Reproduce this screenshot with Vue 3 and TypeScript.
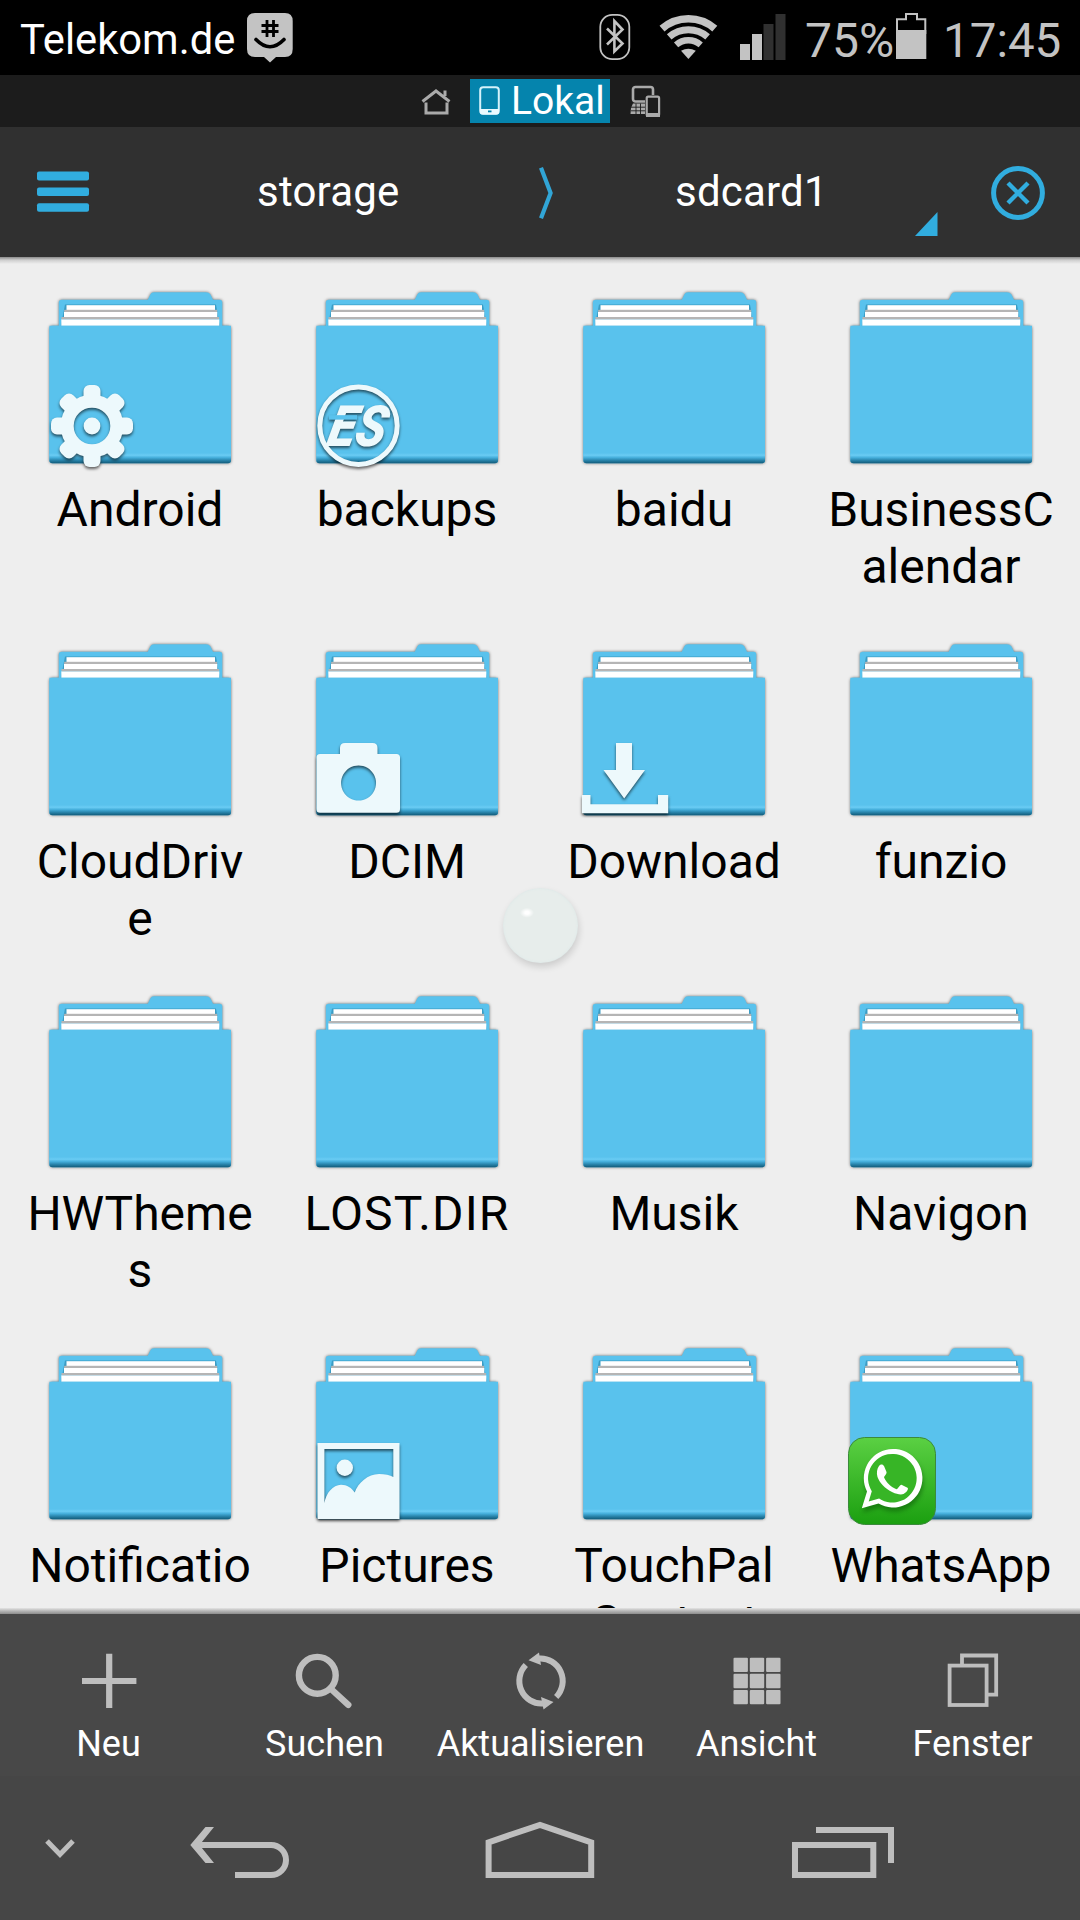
<script setup lang="ts">
type Badge = 'gear' | 'es' | 'camera' | 'download' | 'picture' | 'whatsapp'

interface Folder {
  lines: string[]
  badge?: Badge
  wide?: boolean
}

const folders: Folder[] = [
  { lines: ['Android'], badge: 'gear' },
  { lines: ['backups'], badge: 'es' },
  { lines: ['baidu'] },
  { lines: ['BusinessC', 'alendar'] },
  { lines: ['CloudDriv', 'e'] },
  { lines: ['DCIM'], badge: 'camera' },
  { lines: ['Download'], badge: 'download' },
  { lines: ['funzio'] },
  { lines: ['HWTheme', 's'] },
  { lines: ['LOST.DIR'], wide: true },
  { lines: ['Musik'] },
  { lines: ['Navigon'] },
  { lines: ['Notificatio'] },
  { lines: ['Pictures'], badge: 'picture' },
  { lines: ['TouchPal', 'Contact'] },
  { lines: ['WhatsApp'], badge: 'whatsapp' },
]

const actions = [
  { id: 'new', label: 'Neu' },
  { id: 'search', label: 'Suchen' },
  { id: 'refresh', label: 'Aktualisieren' },
  { id: 'view', label: 'Ansicht' },
  { id: 'windows', label: 'Fenster' },
]

const teeth = [0, 45, 90, 135, 180, 225, 270, 315]
const cells = [0, 1, 2, 3, 4, 5, 6, 7, 8]
</script>

<template>
  <div class="screen">
    <svg class="defs" width="0" height="0">
      <defs>
        <linearGradient id="edge" x1="0" y1="0" x2="0" y2="1">
          <stop offset="0" stop-color="#59c2ed" />
          <stop offset="0.22" stop-color="#6accf4" />
          <stop offset="0.45" stop-color="#45aedb" />
          <stop offset="0.7" stop-color="#2a86ad" />
          <stop offset="1" stop-color="#115a79" />
        </linearGradient>
        <linearGradient id="wa" x1="0" y1="0" x2="0" y2="1">
          <stop offset="0" stop-color="#5bd043" />
          <stop offset="1" stop-color="#1b9f10" />
        </linearGradient>
      </defs>
    </svg>

    <div class="status">
      <span class="carrier">Telekom.de</span>
      <svg class="groupme" width="50" height="56" viewBox="0 0 50 56">
        <path d="M10 3H40Q47.7 3 47.7 11V39Q47.7 47 40 47H31L25 52.5L19 47H10Q2 47 2 39V11Q2 3 10 3Z" fill="#c3c3c3" />
        <path d="M22 10V27M28.5 10V27M16.5 15.5H33.5M16.5 21.5H33.5" stroke="#000" stroke-width="2.8" fill="none" />
        <path d="M11 29.5Q25 44 39 29.5" stroke="#000" stroke-width="3.6" fill="none" stroke-linecap="round" />
      </svg>
      <svg class="bt" width="38" height="56" viewBox="0 0 38 56">
        <rect x="4.3" y="4.8" width="29" height="44.4" rx="12" fill="none" stroke="#c3c3c3" stroke-width="1.8" />
        <path d="M11 18.5L26.5 33.5L18.4 41.5V11L26.5 19.5L11 34.5" fill="none" stroke="#c3c3c3" stroke-width="2.6" />
      </svg>
      <svg class="wifi" width="66" height="56" viewBox="0 0 66 56">
        <g fill="none" stroke="#c3c3c3">
          <path d="M7 18.7A40.2 40.2 0 0 1 59.8 18.7" stroke-width="7.6" />
          <path d="M14.2 26.9A29.3 29.3 0 0 1 52.6 26.9" stroke-width="7" />
          <path d="M21.1 34.9A18.7 18.7 0 0 1 45.7 34.9" stroke-width="6.4" />
        </g>
        <path d="M33.4 49L26 40.8Q33.4 36.6 40.8 40.8Z" fill="#c3c3c3" />
      </svg>
      <svg class="signal" width="48" height="56" viewBox="0 0 48 56">
        <path d="M1 34H11V50H1ZM13 24H23V50H13Z" fill="#c3c3c3" />
        <path d="M24.5 14H34.5V50H24.5ZM36.5 4H46.5V50H36.5Z" fill="#303030" />
      </svg>
      <span class="percent">75%</span>
      <svg class="battery" width="34" height="56" viewBox="0 0 34 56">
        <path d="M3 24V9.3H12V4H23V9.3H31.3V24" fill="none" stroke="#c3c3c3" stroke-width="2" />
        <rect x="2" y="20" width="30.3" height="29" fill="#c3c3c3" />
      </svg>
      <span class="clock">17:45</span>
    </div>

    <div class="tabs">
      <svg class="home" width="32" height="32" viewBox="0 0 32 32">
        <path d="M2.5 15.5L16 5L29.5 15.5M25 10V4.5" fill="none" stroke="#aaa" stroke-width="3" />
        <path d="M6 16.5V27H27V16.5" fill="none" stroke="#aaa" stroke-width="3" />
      </svg>
      <div class="chip">
        <svg width="22" height="32" viewBox="0 0 22 32">
          <rect x="1.2" y="2.2" width="18.6" height="26.6" rx="3" fill="none" stroke="#d5f2fb" stroke-width="2" />
          <path d="M1 24H20V27Q20 29.5 17.5 29.5H3.5Q1 29.5 1 27Z" fill="#eafaff" />
          <rect x="9" y="25.5" width="3.5" height="1.8" fill="#0584ad" />
        </svg>
        <span>Lokal</span>
      </div>
      <svg class="devices" width="32" height="36" viewBox="0 0 32 36">
        <rect x="3" y="3" width="20" height="14.5" rx="2.5" fill="none" stroke="#aaa" stroke-width="2.6" />
        <path d="M3 19.5H15V30H.5L1 24Z" fill="#aaa" />
        <path d="M1 23.2H15M1 26.8H15M6 19.5V30M10.5 19.5V30" stroke="#1c1c1c" stroke-width=".9" />
        <rect x="15" y="11" width="16" height="23.5" rx="2" fill="#1c1c1c" />
        <rect x="16.7" y="12.7" width="12.4" height="19" rx="1.5" fill="none" stroke="#aaa" stroke-width="2.2" />
        <path d="M16 29H30V33H16Z" fill="#aaa" />
      </svg>
    </div>

    <div class="path">
      <svg class="menu" width="54" height="42" viewBox="0 0 54 42">
        <g fill="#31addf">
          <rect x="1" y="1.4" width="52" height="9" rx="2" />
          <rect x="1" y="17.4" width="52" height="8.6" rx="2" />
          <rect x="1" y="33.2" width="52" height="8.6" rx="2" />
        </g>
      </svg>
      <span class="crumb storage">storage</span>
      <svg class="sep" width="18" height="52" viewBox="0 0 18 52">
        <path d="M3 .8L12.6 26L3 51.2" fill="none" stroke="#31a5d6" stroke-width="4.2" />
      </svg>
      <span class="crumb card">sdcard1</span>
      <svg class="corner" width="23" height="24" viewBox="0 0 23 24"><path d="M0 24H22.5V0Z" fill="#31addf" /></svg>
      <svg class="close" width="56" height="56" viewBox="0 0 56 56">
        <circle cx="28" cy="28" r="24.4" fill="none" stroke="#31addf" stroke-width="5" />
        <path d="M18 18L38 38M38 18L18 38" stroke="#31addf" stroke-width="4.4" />
      </svg>
    </div>

    <main class="files">
      <div class="grid">
        <div v-for="folder in folders" :key="folder.lines[0]" class="cell">
          <svg class="folder" width="192" height="190" viewBox="0 0 192 190">
            <g class="soft">
              <path d="M14.8 44V18.5Q14.8 15.8 17.8 15.8H103.8L106.3 10.5Q107.3 8.2 110 8.2H162Q165 8.2 166.5 10.5L169 15.8H175.5Q178.3 15.8 178.3 18.5V44Z" fill="#59c2ed" />
              <rect x="5.4" y="41.8" width="181.6" height="137.5" rx="3" fill="#59c2ed" />
            </g>
            <path d="M21 20.4H172L175.8 41.8H16.8Z" fill="#3b9cc4" />
            <rect x="22.5" y="21.2" width="148.5" height="6" fill="#fff" />
            <rect x="20.2" y="25.8" width="153" height="2.2" fill="#b5b5b5" />
            <rect x="20" y="28" width="153.3" height="6" fill="#fff" />
            <rect x="17.5" y="33" width="157.6" height="2.4" fill="#b5b5b5" />
            <rect x="17.3" y="35.4" width="158" height="6.4" fill="#fff" />
            <path d="M5.4 41.8H187V171H5.4Z" fill="#59c2ed" />
            <path d="M5.4 169H187V176.5Q187 179.3 184 179.3H8.4Q5.4 179.3 5.4 176.5Z" fill="url(#edge)" />

            <g v-if="folder.badge === 'gear'" class="badge">
              <rect v-for="t in teeth" :key="t" x="39.5" y="101" width="17" height="22" rx="6" :transform="`rotate(${t} 48 142)`" fill="#edf9fc" />
              <circle cx="48" cy="142" r="24.8" fill="none" stroke="#edf9fc" stroke-width="13" />
              <circle cx="48" cy="142" r="8.4" fill="#edf9fc" />
            </g>

            <g v-else-if="folder.badge === 'es'" class="badge">
              <circle cx="47.5" cy="141.7" r="38.7" fill="none" stroke="#edf9fc" stroke-width="5" />
              <text x="0" y="0" class="es" transform="translate(14.5 161.5) skewX(-12)" textLength="58" lengthAdjust="spacingAndGlyphs">ES</text>
              <path d="M18 133.4H46" stroke="#59c2ed" stroke-width="4.5" />
            </g>

            <g v-else-if="folder.badge === 'camera'" class="badge">
              <path fill-rule="evenodd" d="M9 118H29V112Q29 107 34 107H61.5Q66.5 107 66.5 112V118H85.5Q89 118 89 121.5V173.2Q89 176.7 85.5 176.7H9Q5.5 176.7 5.5 173.2V121.5Q5.5 118 9 118ZM47.5 129.5A17.5 17.5 0 1 0 47.6 129.5Z" fill="#edf9fc" />
            </g>

            <g v-else-if="folder.badge === 'download'" class="badge">
              <path d="M38 107H54V134H67L46.2 162.5L25.5 134H38Z" fill="#edf9fc" />
              <path d="M3.9 159H12.5V168.3H80V159H90.2V177.3H3.9Z" fill="#edf9fc" />
            </g>

            <g v-else-if="folder.badge === 'picture'" class="badge">
              <path fill-rule="evenodd" d="M6.5 103H88.5V179H6.5ZM13.4 109V163C15 153 22 144.7 30 144.7C36 144.7 41 148 43.7 152.5C47 143 57 134 68 134C74 134 79 135 82.3 137V109Z" fill="#edf9fc" />
              <circle cx="33.8" cy="127.7" r="8.2" fill="#edf9fc" />
            </g>

            <g v-else-if="folder.badge === 'whatsapp'">
              <rect x="3.5" y="97.5" width="87" height="87" rx="16" fill="url(#wa)" stroke="#3b8a3c" stroke-width="1" />
              <g class="badge green">
                <path d="M16.8 168.3L22 151.5A29.3 29.3 0 1 1 33.5 163.6Z" fill="#fff" />
                <path d="M23.7 161.5L26.8 151.2A24.3 24.3 0 1 1 34.1 158.6Z" fill="#37b526" />
                <path d="M34 126C36 123.5 38 124.3 39 126L41.5 132C42 134 39 136 39.1 137.5C41.5 143 46 147 51.5 149.2C53 149 54.5 145 56.5 144.8L62.5 147.8C64 149 61.5 152.5 58.5 154C55.5 155 51.5 154 47.5 152.2C39.5 148.5 34.5 142.5 32.5 137C31.3 133 32 128.5 34 126Z" fill="#fff" />
              </g>
            </g>
          </svg>
          <div class="name" :class="{ wide: folder.wide }">
            <div v-for="line in folder.lines" :key="line">{{ line }}</div>
          </div>
        </div>
      </div>
      <div class="shade top"></div>
      <div class="bubble"></div>
    </main>
    <div class="shade bottom"></div>

    <div class="toolbar">
      <div v-for="action in actions" :key="action.id" class="action">
        <svg width="60" height="60" viewBox="0 0 60 60">
          <path v-if="action.id === 'new'" d="M4 30H58.4M31.2 2.7V57" stroke="#bebebe" stroke-width="6.2" />
          <g v-else-if="action.id === 'search'" fill="none" stroke="#bebebe">
            <circle cx="23.3" cy="24.3" r="18.4" stroke-width="6.4" />
            <path d="M36.5 37.5L54.3 53.8" stroke-width="6.4" stroke-linecap="round" />
          </g>
          <g v-else-if="action.id === 'refresh'">
            <path d="M15.8 14A22 22.5 0 0 0 33 52.4M46.2 46A22 22.5 0 0 0 29 7.6" fill="none" stroke="#bebebe" stroke-width="6" />
            <path d="M18.5 9.2L29 1.5L31 14ZM43.5 51L33.5 58.5L31 46Z" fill="#bebebe" />
          </g>
          <g v-else-if="action.id === 'view'" fill="#bebebe">
            <rect v-for="c in cells" :key="c" :x="7.5 + (c % 3) * 16.3" :y="6.7 + Math.floor(c / 3) * 16.1" width="14.4" height="14.4" rx="1" />
          </g>
          <g v-else fill="none" stroke="#bebebe" stroke-width="3.8">
            <rect x="7.6" y="14.6" width="37" height="39.4" />
            <path d="M20 13V4.5H54.2V43.7H46" />
          </g>
        </svg>
        <span>{{ action.label }}</span>
      </div>
    </div>

    <div class="nav">
      <svg class="n1" width="40" height="60" viewBox="0 0 40 60"><path d="M7 21L20 34.5L33 21" fill="none" stroke="#bebebe" stroke-width="5" /></svg>
      <svg class="n2" width="110" height="60" viewBox="0 0 110 60">
        <path d="M12 25H86A15 15 0 0 1 86 55H50" fill="none" stroke="#bebebe" stroke-width="6" />
        <path d="M5.3 25L20.5 7H29L14.5 25L29 43H20.5Z" fill="#bebebe" />
      </svg>
      <svg class="n3" width="120" height="60" viewBox="0 0 120 60"><path d="M8.6 55V22.3L60 4.8L111.2 22.3V55Z" fill="none" stroke="#bebebe" stroke-width="6" /></svg>
      <svg class="n4" width="110" height="60" viewBox="0 0 110 60"><path d="M7 25H85.3V55H7ZM28 10H103V43" fill="none" stroke="#bebebe" stroke-width="6" /></svg>
    </div>
  </div>
</template>

<style>
body {
  margin: 0;
  background: #484848;
}
</style>

<style scoped>
.screen {
  width: 1080px;
  height: 1920px;
  overflow: hidden;
  display: flex;
  flex-direction: column;
  position: relative;
  font-family: Roboto, 'Noto Sans', sans-serif;
}
.screen svg {
  display: block;
  flex: none;
}
.defs {
  position: absolute;
}
.status {
  height: 75px;
  flex: none;
  background: #000;
  display: flex;
  align-items: flex-start;
  box-sizing: border-box;
  padding-top: 10px;
  color: #c3c3c3;
  white-space: nowrap;
}
.carrier {
  width: 225px;
  margin-left: 20px;
  font-size: 41.7px;
  line-height: 60px;
  color: #fff;
}
.bt {
  margin-left: 301px;
}
.wifi {
  margin-left: 21px;
}
.signal {
  margin-left: 18px;
}
.percent {
  width: 90px;
  margin-left: 18px;
  font-size: 48px;
  line-height: 62px;
}
.battery {
  margin-left: -1px;
}
.clock {
  margin-left: 15px;
  font-size: 47.5px;
  line-height: 62px;
}
.tabs {
  height: 52px;
  flex: none;
  background: #1c1c1c;
  display: flex;
  align-items: flex-start;
}
.home {
  margin: 11px 0 0 420px;
}
.chip {
  width: 140px;
  height: 44px;
  margin: 4px 0 0 18px;
  background: #0584ad;
  display: flex;
  color: #fff;
  font-size: 39px;
  line-height: 44px;
}
.chip svg {
  margin: 6px 9px 0 9px;
}
.chip span {
  margin-left: 1px;
}
.devices {
  margin: 9px 0 0 20px;
}
.path {
  height: 130px;
  flex: none;
  background: #303030;
  display: flex;
  align-items: flex-start;
}
.menu {
  margin: 43px 0 0 36px;
}
.crumb {
  color: #fff;
  font-size: 42px;
  line-height: 50px;
  margin-top: 40px;
  white-space: nowrap;
  letter-spacing: 0.2px;
}
.storage {
  width: 142px;
  margin-left: 167px;
}
.sep {
  margin: 40px 0 0 139px;
}
.card {
  width: 147px;
  margin-left: 119px;
}
.corner {
  margin: 85px 0 0 93px;
}
.close {
  margin: 38px 0 0 52px;
}
.files {
  height: 1351px;
  flex: none;
  background: #eee;
  position: relative;
  overflow: hidden;
}
.grid {
  display: grid;
  grid-template-columns: repeat(4, 267px);
  grid-auto-rows: 352px;
  padding: 27px 0 0 6.5px;
}
.cell {
  display: flex;
  flex-direction: column;
  align-items: center;
}
.folder {
  overflow: visible;
}
.soft {
  filter: drop-shadow(0 0 1.5px rgba(0, 0, 0, 0.55));
}
.badge {
  filter: drop-shadow(0 2px 1.5px rgba(0, 0, 0, 0.6));
}
.badge.green {
  filter: drop-shadow(1px 4px 2px rgba(0, 60, 0, 0.4));
}
.es {
  font: italic 900 57px Roboto, sans-serif;
  fill: #edf9fc;
}
.name {
  margin-top: 7px;
  font-size: 48px;
  line-height: 57px;
  text-align: center;
  color: #000;
  white-space: nowrap;
}
.name.wide {
  letter-spacing: 1.1px;
}
.shade {
  flex: none;
  height: 7px;
}
.shade.top {
  position: absolute;
  left: 0;
  right: 0;
  top: 0;
  background: linear-gradient(#8a8a8a, #cfcfcf 45%, #eee);
}
.shade.bottom {
  height: 6px;
  background: linear-gradient(#e4e4e4, #b5b5b5 50%, #8c8c8c);
}
.bubble {
  position: absolute;
  left: 503px;
  top: 631px;
  width: 75px;
  height: 75px;
  border-radius: 50%;
  background: radial-gradient(ellipse 7px 5px at 32% 33%, #fff 30%, transparent 100%), #e7edeb;
  box-shadow: 1px 4px 7px rgba(0, 0, 0, 0.14), inset 0 0 3px #dbe8e8;
}
.toolbar {
  height: 162px;
  flex: none;
  background: #484848;
  display: flex;
}
.action {
  width: 216px;
  display: flex;
  flex-direction: column;
  align-items: center;
  padding-top: 37px;
  color: #fff;
  font-size: 36px;
  line-height: 42px;
  box-sizing: border-box;
}
.action span {
  margin: 12px 0 0 1px;
}
.nav {
  height: 144px;
  flex: none;
  background: #464646;
  display: flex;
  padding-top: 44px;
  box-sizing: border-box;
}
.n1 {
  margin-left: 40px;
}
.n2 {
  margin-left: 105px;
}
.n3 {
  margin-left: 185px;
}
.n4 {
  margin-left: 188px;
}
</style>
